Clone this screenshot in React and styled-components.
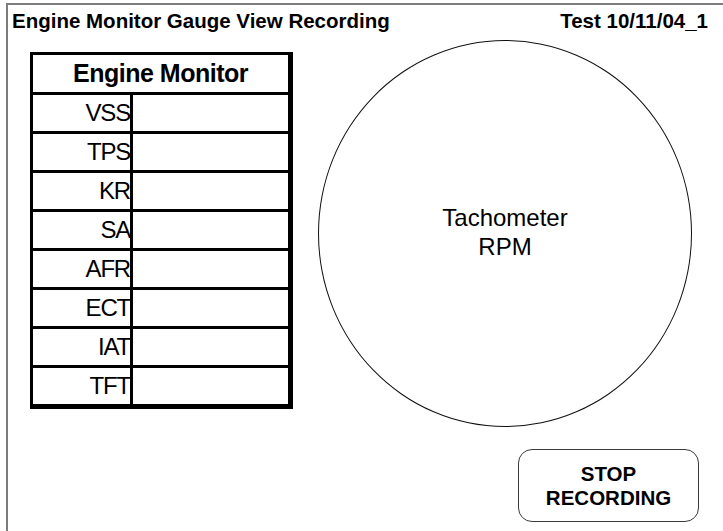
import React from 'react';
import styled, { createGlobalStyle } from 'styled-components';

const GlobalStyle = createGlobalStyle`
  html, body {
    margin: 0;
    padding: 0;
    background: #ffffff;
  }
  body {
    font-family: 'Liberation Sans', Arial, sans-serif;
    color: #000;
  }
`;

const Screen = styled.div`
  width: 723px;
  height: 531px;
  overflow: hidden;
  box-sizing: border-box;
  padding: 3px 0 0 6px;
`;

const Frame = styled.div`
  display: flex;
  flex-direction: column;
  height: 100%;
  border-top: 2px solid #7c7c7c;
  border-left: 2px solid #7c7c7c;
`;

const TitleBar = styled.header`
  display: flex;
  justify-content: space-between;
  align-items: flex-start;
  box-sizing: border-box;
  height: 33px;
  padding: 4px 15px 0 4px;
  font-weight: bold;
  font-size: 20.5px;
`;

const Main = styled.main`
  display: grid;
  grid-template-columns: 310px 1fr;
  flex: 1;
`;

const Table = styled.div`
  margin: 14px 0 0 22px;
  width: 255px;
  border-style: solid;
  border-color: #000;
  border-width: 3px 5px 5px 3px;
  align-self: start;
`;

const TableHead = styled.div`
  height: 37px;
  display: flex;
  align-items: center;
  justify-content: center;
  font-weight: bold;
  font-size: 25px;
  letter-spacing: -0.5px;
`;

const Row = styled.div`
  display: grid;
  grid-template-columns: 100px 1fr;
  height: 36px;
  border-top: 3px solid #000;
`;

const Label = styled.div`
  display: flex;
  align-items: center;
  justify-content: flex-end;
  font-size: 24px;
  letter-spacing: -1.2px;
  border-right: 3px solid #000;
`;

const Value = styled.div``;

const GaugeColumn = styled.div`
  display: flex;
  flex-direction: column;
  align-items: flex-start;
`;

const Dial = styled.div`
  margin-top: 2px;
  width: 374px;
  height: 387px;
  box-sizing: border-box;
  border: 1px solid #111;
  border-radius: 50%;
  padding-bottom: 4px;
  display: flex;
  flex-direction: column;
  align-items: center;
  justify-content: center;
  font-size: 24px;
  line-height: 29px;
  text-align: center;
`;

const StopButton = styled.button`
  align-self: flex-end;
  margin: 22px 24px 0 0;
  width: 181px;
  height: 73px;
  box-sizing: border-box;
  border: 1.5px solid #3a3a3a;
  border-radius: 14px;
  background: #fff;
  font-family: 'Liberation Sans', Arial, sans-serif;
  font-weight: bold;
  font-size: 20.5px;
  line-height: 24px;
  color: #000;
  padding: 0;
`;

const channels = ['VSS', 'TPS', 'KR', 'SA', 'AFR', 'ECT', 'IAT', 'TFT'];

export default function App() {
  return (
    <>
      <GlobalStyle />
      <Screen>
        <Frame>
          <TitleBar>
            <span>Engine Monitor Gauge View Recording</span>
            <span>Test 10/11/04_1</span>
          </TitleBar>
          <Main>
            <div>
              <Table>
                <TableHead>Engine Monitor</TableHead>
                {channels.map((c) => (
                  <Row key={c}>
                    <Label>{c}</Label>
                    <Value />
                  </Row>
                ))}
              </Table>
            </div>
            <GaugeColumn>
              <Dial>
                <div>Tachometer</div>
                <div>RPM</div>
              </Dial>
              <StopButton>
                STOP
                <br />
                RECORDING
              </StopButton>
            </GaugeColumn>
          </Main>
        </Frame>
      </Screen>
    </>
  );
}
